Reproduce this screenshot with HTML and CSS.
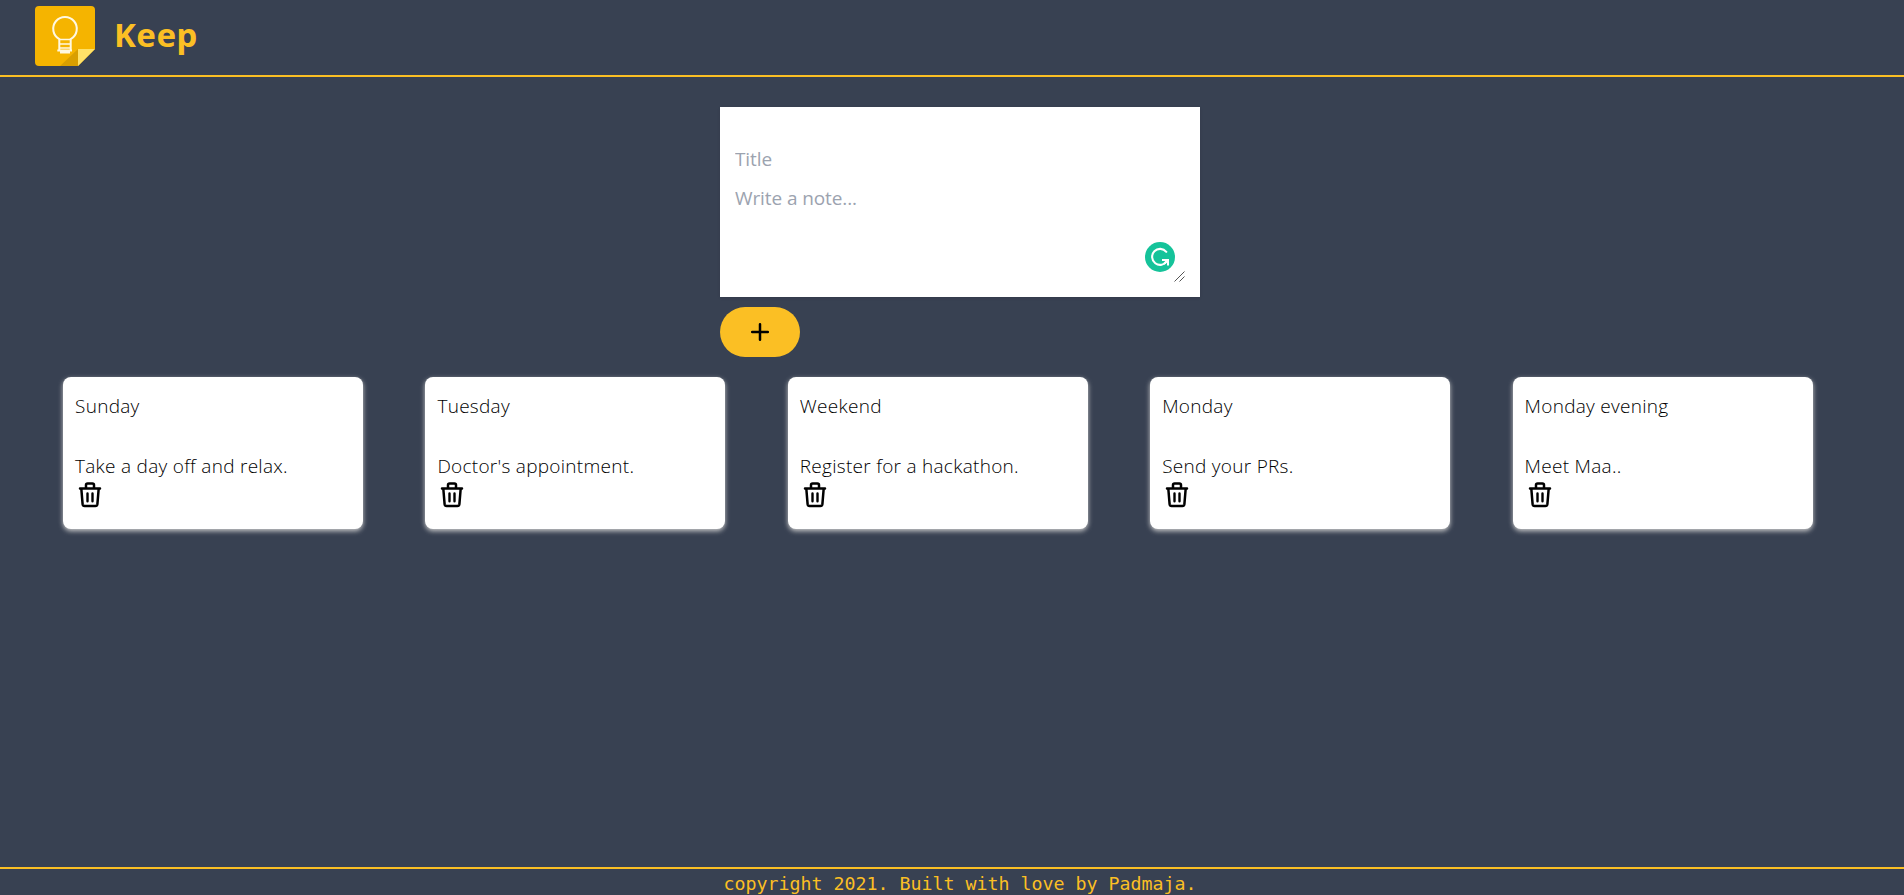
FILE: index.html
```html
<!DOCTYPE html>
<html lang="en">
<head>
<meta charset="utf-8">
<title>Keep</title>
<link rel="stylesheet" href="styles.css">
</head>
<body>
<svg width="0" height="0" class="defs">
  <symbol id="trash" viewBox="0 0 24 28">
    <g fill="none" stroke="#000" stroke-linecap="round" stroke-linejoin="round">
      <path stroke-width="2.5" d="M2 7.5H22M3.3 7.5L4.6 23.2Q4.8 25 6.6 25H17.4Q19.2 25 19.4 23.2L20.7 7.5M8 7.5V4Q8 2.4 9.6 2.4H14.4Q16 2.4 16 4V7.5"/>
      <path stroke-width="2.4" d="M9.5 12.4V20.3M14.5 12.4V20.3"/>
    </g>
  </symbol>
</svg>
<header class="header">
  <svg class="logo" viewBox="0 0 60 60">
    <path fill="#f5b400" d="M4 0H56Q60 0 60 4V43L43 60H4Q0 60 0 56V4Q0 0 4 0Z"/>
    <path fill="#d99f00" d="M43 43V60H25Z"/>
    <path fill="#ffe168" d="M43 43H60L43 60Z"/>
    <g fill="none" stroke="#fff8e1" stroke-width="2">
      <path d="M24.3 45V33.1A11.8 11.8 0 1 1 35.7 33.1V45"/>
      <path d="M24 33.5H36M24 38H36M24 42H36" stroke-width="1.6"/>
    </g>
    <path fill="#fff8e1" d="M22.3 43.5H37V45.5H35V47.5H25V45.5H22.3Z"/>
  </svg>
  <h1 class="brand">Keep</h1>
</header>
<main class="main">
  <form class="composer">
    <div class="panel">
      <input class="field" type="text" placeholder="Title">
      <textarea class="field area" placeholder="Write a note..."></textarea>
      <svg class="checker" viewBox="0 0 30 30">
        <circle cx="15" cy="15" r="15" fill="#15c39a"/>
        <path d="M21.3 9.8A8 8 0 1 0 22 19" fill="none" stroke="#fff" stroke-width="2.1" stroke-linecap="round"/>
        <path d="M17 17.9H23V23.5M22.6 18.3L18.8 22" fill="none" stroke="#fff" stroke-width="2"/>
      </svg>
      <svg class="grip" viewBox="0 0 11 11"><path d="M.5 10.5L10.5 .5M5.5 10.5L10.5 5.5" stroke="#555" fill="none"/></svg>
    </div>
    <button class="add" type="button" aria-label="Add note">
      <svg viewBox="0 0 20 20"><path d="M10 2.2V17.8M2.2 10H17.8" stroke="#000" stroke-width="2.5" stroke-linecap="round"/></svg>
    </button>
  </form>
  <section class="notes">
    <article class="note"><h2 class="text">Sunday</h2><p class="text">Take a day off and relax.</p><svg class="trash"><use href="#trash"/></svg></article>
    <article class="note"><h2 class="text">Tuesday</h2><p class="text">Doctor's appointment.</p><svg class="trash"><use href="#trash"/></svg></article>
    <article class="note"><h2 class="text">Weekend</h2><p class="text">Register for a hackathon.</p><svg class="trash"><use href="#trash"/></svg></article>
    <article class="note"><h2 class="text">Monday</h2><p class="text">Send your PRs.</p><svg class="trash"><use href="#trash"/></svg></article>
    <article class="note"><h2 class="text">Monday evening</h2><p class="text">Meet Maa..</p><svg class="trash"><use href="#trash"/></svg></article>
  </section>
</main>
<footer class="footer">copyright 2021. Built with love by Padmaja.</footer>
</body>
</html>
```
FILE: styles.css
```css
* { box-sizing: border-box; }
body {
  margin: 0;
  height: 895px;
  display: flex;
  flex-direction: column;
  overflow: hidden;
  background: #384152;
  font-family: "Open Sans", "Noto Sans", sans-serif;
}
.defs { position: absolute; }
.header {
  height: 77px;
  display: flex;
  align-items: flex-start;
  padding: 6px 0 0 35px;
  border-bottom: 2px solid #fbbf24;
}
.logo { width: 60px; height: 60px; }
.brand {
  margin: 5px 0 0 19px;
  font: 700 33px/48px "Noto Sans", sans-serif;
  letter-spacing: .4px;
  color: #fbbf24;
}
.main { flex: 1; }
.composer { width: 480px; margin: 30px auto 0 720px; }
.panel {
  position: relative;
  height: 190px;
  padding: 32px 15px 15px;
  background: #fff;
  box-shadow: 0 1px 3px rgba(0, 0, 0, .1);
}
.field {
  display: block;
  width: 100%;
  height: 39px;
  padding: 0;
  border: 0;
  outline: 0;
  background: none;
  font: 400 19px/40px "Open Sans", sans-serif;
  letter-spacing: -.1px;
}
.field::placeholder { color: #9ca3af; opacity: 1; }
.area { height: 100px; resize: none; overflow: hidden; }
.checker { position: absolute; left: 425px; top: 135px; width: 30px; height: 30px; }
.grip { position: absolute; left: 454px; top: 164px; width: 11px; height: 11px; }
.add {
  display: flex;
  align-items: center;
  justify-content: center;
  width: 80px;
  height: 50px;
  margin-top: 10px;
  padding: 0;
  border: 0;
  border-radius: 25px;
  background: #fbbf24;
}
.add svg { width: 20px; height: 20px; }
.notes {
  display: grid;
  grid-template-columns: repeat(5, 300px);
  column-gap: 62.4px;
  margin: 20px 0 0 63px;
}
.note {
  height: 152px;
  padding: 14px 12px 0;
  border-radius: 8px;
  background: #fff;
  box-shadow: 0 2px 5px #ccc;
}
.text {
  margin: 0 0 30px;
  font-size: 19px;
  font-weight: 300;
  line-height: 30px;
  letter-spacing: .28px;
  white-space: nowrap;
  color: #000;
}
p.text { margin: 0; }
.trash { display: block; width: 24px; height: 28px; margin-left: 3px; }
.footer {
  height: 28px;
  border-top: 2px solid #fbbf24;
  text-align: center;
  color: #fbbf24;
  font: 18.27px/30px "DejaVu Sans Mono", monospace;
  padding-left: 16px;
}
```
